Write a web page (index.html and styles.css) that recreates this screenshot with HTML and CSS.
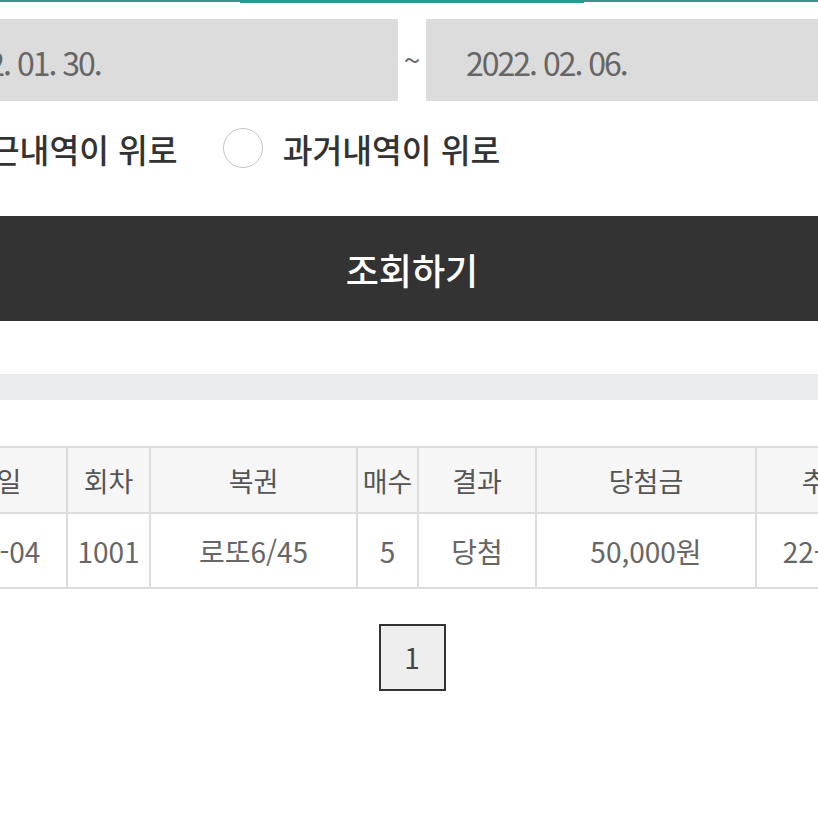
FILE: index.html
```html
<!DOCTYPE html>
<html lang="ko">
<head>
    <meta charset="UTF-8">
    <meta name="viewport" content="width=device-width, initial-scale=1.0">
    <title>구매내역 조회</title>
    <link rel="stylesheet" href="styles.css">
</head>
<body>
  <div class="page">
    <div class="tab-line"><span class="tab-active"></span></div>

    <div class="period">
        <div class="date-box">2022. 01. 30.</div>
        <span class="tilde">~</span>
        <div class="date-box">2022. 02. 06.</div>
    </div>

    <div class="sort-row">
        <label class="sort-opt"><span class="radio"></span>최근내역이 위로</label>
        <label class="sort-opt"><span class="radio"></span>과거내역이 위로</label>
    </div>

    <button class="search-btn" type="button">조회하기</button>

    <div class="summary-bar"></div>

    <table class="history">
        <colgroup>
            <col style="width: 166px">
            <col style="width: 83px">
            <col style="width: 207px">
            <col style="width: 61px">
            <col style="width: 118px">
            <col style="width: 220px">
            <col style="width: 166px">
        </colgroup>
        <thead>
            <tr>
                <th>구입일</th>
                <th>회차</th>
                <th>복권</th>
                <th>매수</th>
                <th>결과</th>
                <th>당첨금</th>
                <th>추첨일</th>
            </tr>
        </thead>
        <tbody>
            <tr>
                <td>22-02-04</td>
                <td>1001</td>
                <td>로또6/45</td>
                <td>5</td>
                <td>당첨</td>
                <td>50,000원</td>
                <td>22-02-05</td>
            </tr>
        </tbody>
    </table>

    <div class="paging">
        <span class="page-num">1</span>
    </div>
  </div>
</body>
</html>
```

FILE: styles.css
```css
body {
    margin: 0;
    padding-left: 6px;
    display: flex;
    justify-content: center;
    overflow: hidden;
    background: #fff;
    font-family: "Noto Sans CJK KR", "Noto Sans", sans-serif;
}

.page {
    width: 1024px;
    flex-shrink: 0;
}

.tab-line {
    height: 2px;
    background: #3e908c;
    display: flex;
    justify-content: center;
}

.tab-active {
    width: 344px;
    height: 3px;
    background: #289a90;
}

.period {
    display: flex;
    align-items: center;
    margin-top: 17px;
}

.date-box {
    flex: 1;
    height: 78px;
    line-height: 78px;
    padding: 4px 0 0 40px;
    background: #dcdcdc;
    color: #666;
    font-size: 32px;
    letter-spacing: -2px;
}

.tilde {
    width: 28px;
    text-align: center;
    color: #666;
    font-size: 30px;
    margin-bottom: 2px;
}

.sort-row {
    display: flex;
    gap: 45px;
    margin-top: 27px;
    height: 40px;
}

.sort-opt {
    display: flex;
    align-items: center;
    gap: 20px;
    font-size: 32.4px;
    font-weight: 500;
    color: #333;
}

.radio {
    width: 38px;
    height: 38px;
    border: 1px solid #c4c4c4;
    border-radius: 50%;
    box-sizing: content-box;
}

.search-btn {
    display: block;
    width: 100%;
    height: 105px;
    margin-top: 48px;
    border: none;
    background: #333;
    color: #fff;
    font-family: inherit;
    font-size: 36px;
    font-weight: 500;
}

.summary-bar {
    height: 26px;
    margin-top: 53px;
    background: #e8ecec;
}

.history {
    width: 1021px;
    margin-top: 46px;
    border-collapse: collapse;
    table-layout: fixed;
    border-top: 2px solid #d9d9d9;
    border-bottom: 2px solid #d9d9d9;
}

.history th,
.history td {
    border: 2px solid #dcdcdc;
    padding: 0;
    text-align: center;
    font-size: 27px;
    white-space: nowrap;
}

.history th {
    height: 64px;
    background: #f6f6f6;
    color: #555;
    font-weight: 400;
}

.history td {
    height: 73px;
    color: #666;
    font-size: 28px;
}

.paging {
    display: flex;
    justify-content: center;
    margin-top: 35px;
}

.page-num {
    width: 63px;
    height: 63px;
    line-height: 63px;
    text-align: center;
    border: 2px solid #333;
    background: #eee;
    color: #444;
    font-size: 28px;
}
```
